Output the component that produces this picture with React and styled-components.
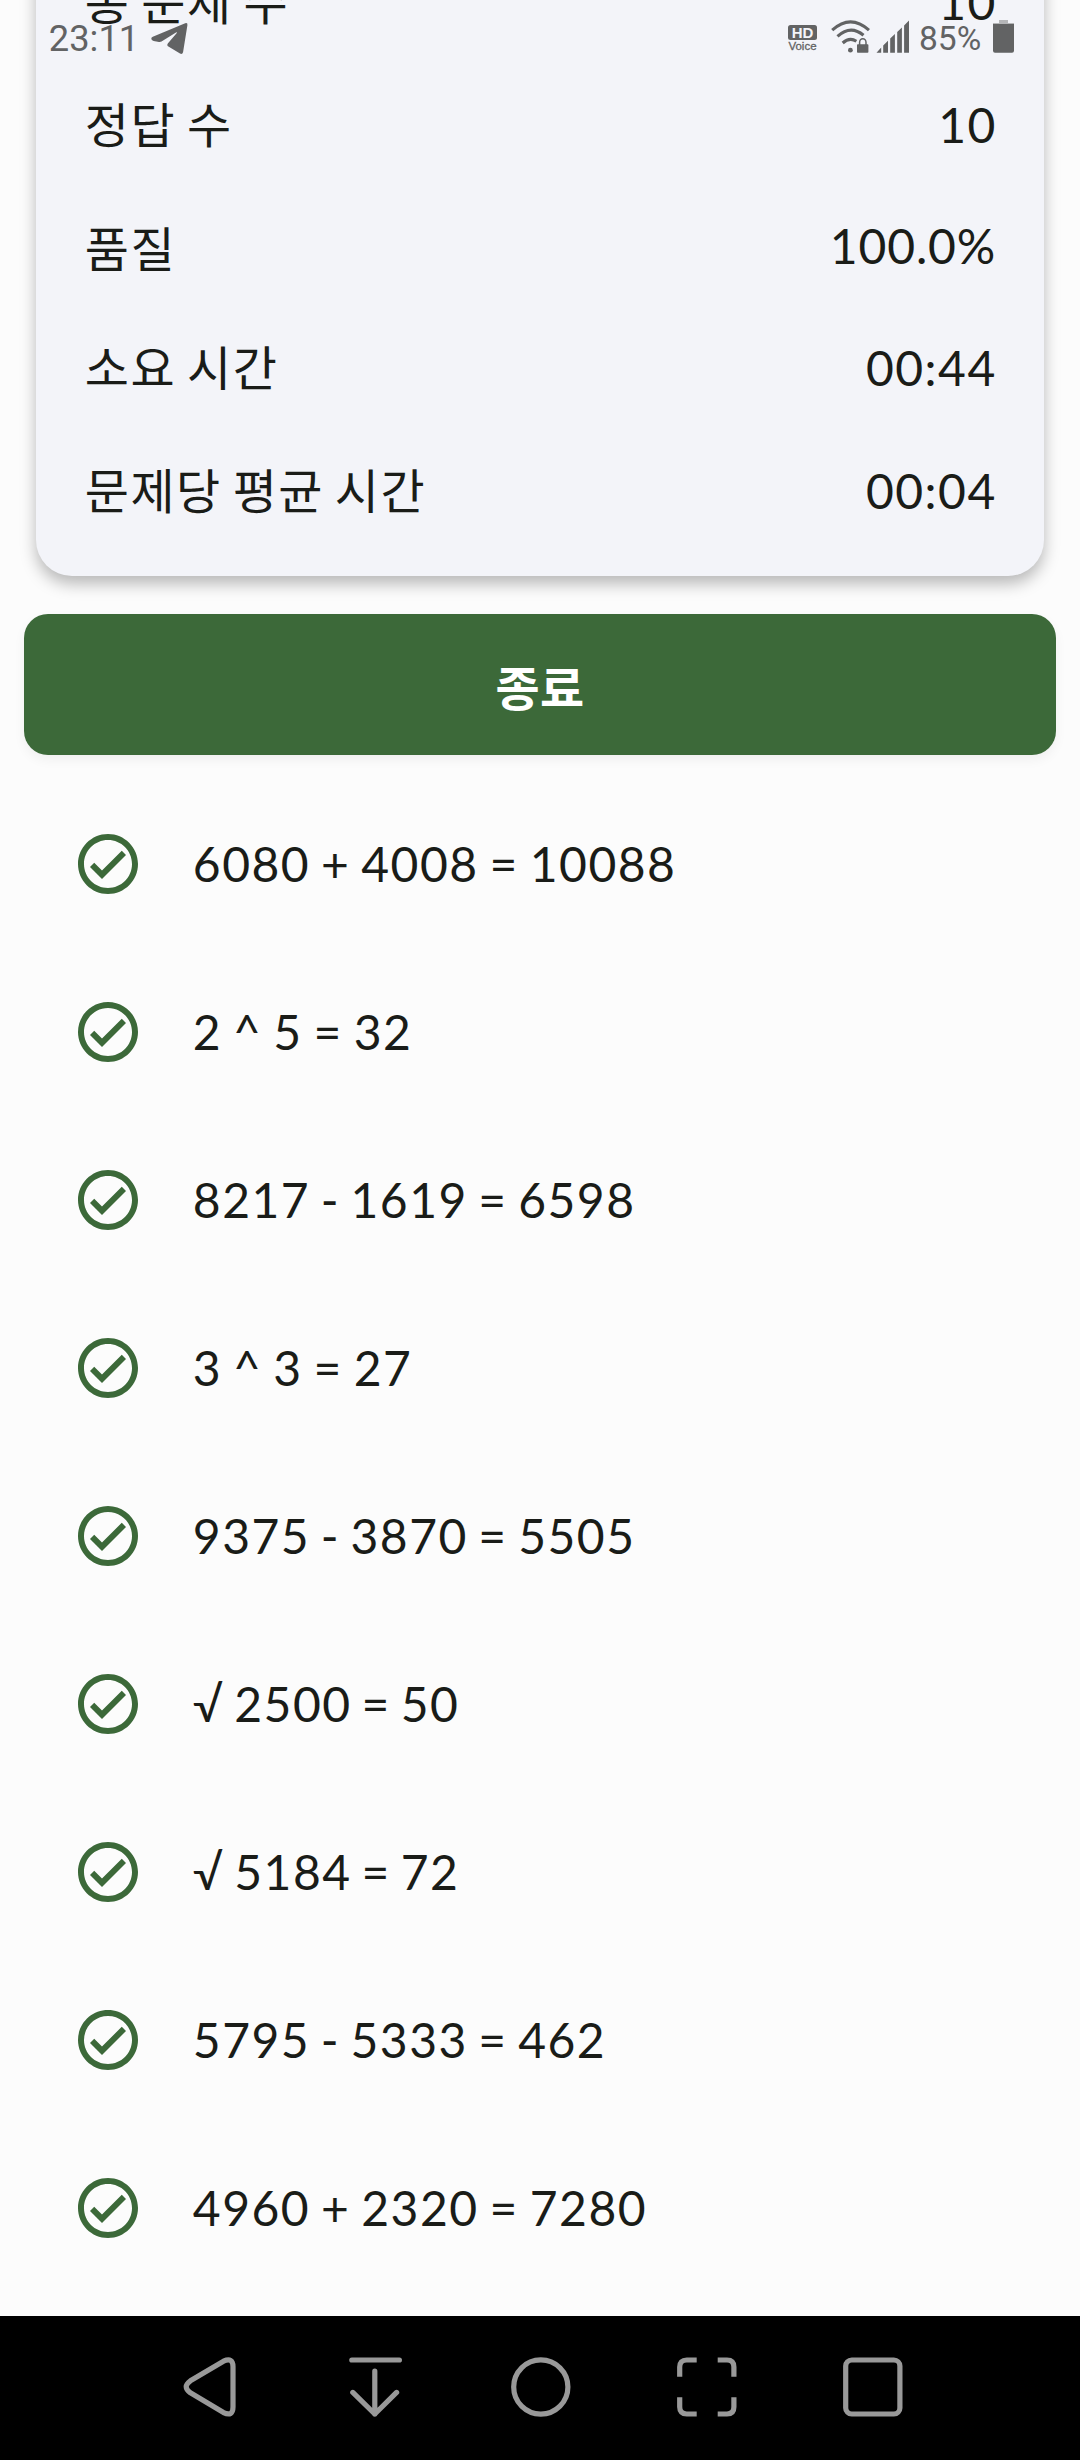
import React from "react";
import styled, { createGlobalStyle } from "styled-components";

const GlobalStyle = createGlobalStyle`
  * { box-sizing: border-box; }
  body { margin: 0; background: #fcfcfc; }
`;

const Screen = styled.div`
  position: relative;
  display: flex;
  flex-direction: column;
  width: 1080px;
  height: 2460px;
  overflow: hidden;
  background: #fcfcfc;
  color: #1a1c18;
  font-family: Lato, "Noto Sans CJK KR", sans-serif;
  font-size: 48px;
  line-height: 72px;
  letter-spacing: 1.5px;
  word-spacing: -2.9px;
`;

const Content = styled.main`
  flex: 1;
  min-height: 0;
  overflow: hidden;
  display: flex;
  flex-direction: column;
`;

const SummaryCard = styled.section`
  flex: none;
  margin: -84px 36px 0;
  height: 660px;
  padding: 0 47.2px 24px 48.8px;
  display: flex;
  flex-direction: column;
  justify-content: flex-end;
  border-radius: 36px;
  background: #f3f4f9;
  box-shadow: 0 8px 16px rgba(0, 0, 0, 0.27);
`;

const SummaryRow = styled.div`
  flex: none;
  height: ${(p) => (p.$compact ? 120 : 123)}px;
  display: flex;
  align-items: center;
  justify-content: space-between;
`;

const Label = styled.span`
  padding-top: ${(p) => (p.$compact ? 6 : 1)}px;
`;

const Value = styled.span`
  padding-right: ${(p) => (p.$compact ? 0.6 : 0)}px;
  padding-bottom: ${(p) => (p.$compact ? 1 : 0)}px;
  letter-spacing: ${(p) => (p.$compact ? 0.9 : 1.5)}px;
`;

const FinishButton = styled.button`
  flex: none;
  margin: 37.5px 24px 0;
  padding: 8px 0 0;
  height: 141px;
  border: 0;
  border-radius: 24px;
  background: #3c6939;
  color: #fff;
  font: 700 48px/72px Lato, "Noto Sans CJK KR", sans-serif;
  letter-spacing: 0.3px;
  box-shadow: 0 5px 12px rgba(0, 0, 0, 0.05);
`;

const List = styled.ul`
  list-style: none;
  margin: 25.5px 0 0;
  padding: 0;
`;

const ListRow = styled.li`
  height: 168px;
  padding: 0 72px;
  display: flex;
  align-items: center;
  gap: 48.8px;
`;

const wordSpacing = { "√": -3.9, "-": -3.3 };

const Expression = styled.span`
  word-spacing: ${(p) => p.$spacing}px;
`;

const StatusBar = styled.header`
  position: absolute;
  inset: 0 0 auto 0;
  height: 76px;
  padding: 0 66px 0 48.8px;
  display: flex;
  align-items: center;
  justify-content: space-between;
  color: #626364;
  font-family: Roboto, sans-serif;
  letter-spacing: 0;
`;

const StatusGroup = styled.div`
  display: flex;
  align-items: center;
`;

const Clock = styled.span`
  font-size: 36.3px;
  width: 102.2px;
  padding-top: 1.5px;
`;

const Percent = styled.span`
  font-size: 33.5px;
  width: 74px;
  padding-top: 1.5px;
`;

const VoiceBadge = styled.div`
  width: 29px;
  margin-right: 14px;
  display: flex;
  flex-direction: column;
  align-items: center;
  font-family: "Liberation Sans", sans-serif;
`;

const HdLabel = styled.span`
  width: 29px;
  height: 15px;
  border-radius: 2.5px;
  background: #626364;
  color: #f3f4f9;
  font-size: 15px;
  font-weight: 700;
  line-height: 16px;
  text-align: center;
`;

const VoiceLabel = styled.span`
  font-size: 11.5px;
  line-height: 12px;
  -webkit-text-stroke: 0.3px currentColor;
`;

const StatusSvg = styled.svg`
  display: block;
  margin-right: ${(p) => p.$gap || 0}px;
`;

const NavBar = styled.nav`
  flex: none;
  height: 144px;
  padding: 41px 0 0 178.6px;
  display: flex;
  gap: 106.2px;
  background: #000;
`;

const NavIcon = styled.svg`
  flex: none;
  width: 60px;
  height: 60px;
  fill: none;
  stroke: #999;
  stroke-width: 5.2;
  stroke-linejoin: round;
`;

const CheckSvg = styled.svg`
  flex: none;
  width: 72px;
  height: 72px;
  fill: #3c6939;
`;

const CheckIcon = () => (
  <CheckSvg viewBox="0 0 24 24">
    <path d="M12 2C6.48 2 2 6.48 2 12s4.48 10 10 10 10-4.48 10-10S17.52 2 12 2zm0 18c-4.41 0-8-3.59-8-8s3.59-8 8-8 8 3.59 8 8-3.59 8-8 8zm4.59-12.42L10 14.17l-2.59-2.58L6 13l4 4 8-8-1.41-1.42z" />
  </CheckSvg>
);

const TelegramIcon = () => (
  <StatusSvg width="37" height="76" viewBox="151 0 37 76" fill="currentColor">
    <path d="M185.2 23.3Q187.8 22.4 187.4 25.2L183.1 52Q182.4 54.8 180 53.6L168.4 46.6Q166.4 45.2 168 43.2L176.8 33Q177.4 31.8 176 32.4L161.5 41.6Q160.4 42.2 159 42L153.6 41Q151.2 40.2 151.3 38.4Q151.3 37.4 152.8 36.7Z" />
  </StatusSvg>
);

const WifiIcon = () => (
  <StatusSvg $gap={6} width="39" height="76" viewBox="831 0 39 76" fill="none" stroke="currentColor" strokeWidth="3.1">
    <path d="M832.2 30.2Q850.5 13.6 869 30.2" />
    <path d="M837.5 36.4Q850.5 24.4 863.5 35.2" />
    <path d="M842.7 43Q849.5 36.8 856.4 41.2" />
    <circle cx="850.4" cy="50.2" r="2.4" fill="currentColor" stroke="none" />
    <path d="M859.6 45V42.4a3.2 3.6 0 0 1 6.4 0V45" strokeWidth="1.5" />
    <rect x="857" y="44.3" width="11.4" height="8.4" rx="0.8" fill="currentColor" stroke="none" />
  </StatusSvg>
);

const SignalIcon = () => (
  <StatusSvg $gap={9} width="34" height="76" viewBox="876 0 34 76" fill="currentColor">
    <path d="M876.5 52.7L881.2 47.6V52.7ZM883.2 52.7V45.4L888 40.8V52.7ZM890.2 52.7V38.6L894.9 33.9V52.7ZM897.2 52.7V32L901.9 27.4V52.7ZM904.1 52.7V25.4L909 20.6V52.7Z" />
  </StatusSvg>
);

const BatteryIcon = () => (
  <StatusSvg width="21" height="76" viewBox="993 0 21 76">
    <path d="M999 20h9v3h6v1.5h-21V23h6z" fill="#b5b6b8" />
    <path d="M993 24h21v26.7a2 2 0 0 1-2 2h-17a2 2 0 0 1-2-2z" fill="#626364" />
  </StatusSvg>
);

const summary = [
  ["총 문제 수", "10"],
  ["정답 수", "10"],
  ["품질", "100.0%", true],
  ["소요 시간", "00:44"],
  ["문제당 평균 시간", "00:04"],
];

const problems = [
  "6080 + 4008 = 10088",
  "2 ^ 5 = 32",
  "8217 - 1619 = 6598",
  "3 ^ 3 = 27",
  "9375 - 3870 = 5505",
  "√ 2500 = 50",
  "√ 5184 = 72",
  "5795 - 5333 = 462",
  "4960 + 2320 = 7280",
];

const spacingFor = (problem) => {
  const operator = Object.keys(wordSpacing).find((op) => problem.includes(op));
  return operator ? wordSpacing[operator] : -2.9;
};

export default function App() {
  return (
    <Screen lang="ko">
      <GlobalStyle />
      <Content>
        <SummaryCard>
          {summary.map(([label, value, compact]) => (
            <SummaryRow key={label} $compact={compact}>
              <Label $compact={compact}>{label}</Label>
              <Value $compact={compact}>{value}</Value>
            </SummaryRow>
          ))}
        </SummaryCard>
        <FinishButton>종료</FinishButton>
        <List>
          {problems.map((problem) => (
            <ListRow key={problem}>
              <CheckIcon />
              <Expression $spacing={spacingFor(problem)}>{problem}</Expression>
            </ListRow>
          ))}
        </List>
      </Content>
      <NavBar>
        <NavIcon strokeLinecap="round">
          <path d="M44.5 4.2L11.4 23.8Q3 29.8 11.4 35.8L44.5 55.6Q54 60 54 50V9.6Q54 0 44.5 4.2Z" />
        </NavIcon>
        <NavIcon strokeLinecap="round">
          <path d="M6.8 3H54.4M29.8 14.2V57M7.8 35.4L29.8 57L51.6 35.4" />
        </NavIcon>
        <NavIcon>
          <circle cx="29.8" cy="30" r="27.1" />
        </NavIcon>
        <NavIcon>
          <path d="M2.7 19.7V10Q2.7 3 9.7 3H19.7M40.7 3H50Q56.9 3 56.9 10V19.7M56.9 40.2V50Q56.9 57 50 57H40.7M19.7 57H9.7Q2.7 57 2.7 50V40.2" />
        </NavIcon>
        <NavIcon>
          <rect x="2.7" y="3" width="54.2" height="54" rx="6" />
        </NavIcon>
      </NavBar>
      <StatusBar>
        <StatusGroup>
          <Clock>23:11</Clock>
          <TelegramIcon />
        </StatusGroup>
        <StatusGroup>
          <VoiceBadge>
            <HdLabel>HD</HdLabel>
            <VoiceLabel>Voice</VoiceLabel>
          </VoiceBadge>
          <WifiIcon />
          <SignalIcon />
          <Percent>85%</Percent>
          <BatteryIcon />
        </StatusGroup>
      </StatusBar>
    </Screen>
  );
}
